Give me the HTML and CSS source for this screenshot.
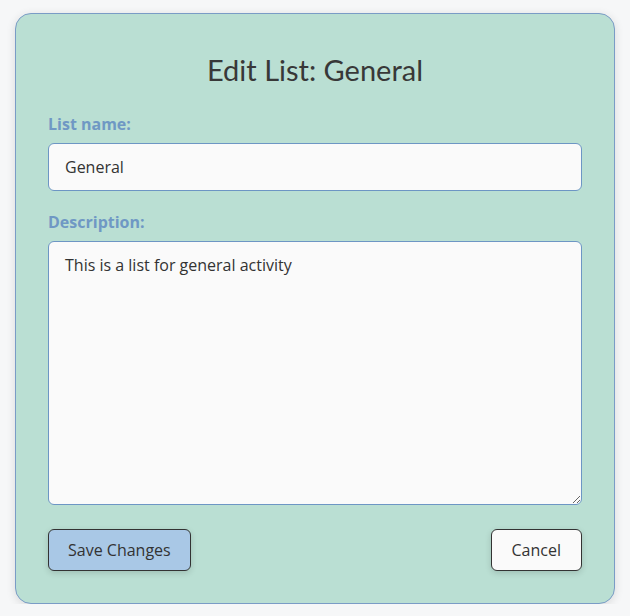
FILE: index.html
```html
<!DOCTYPE html>
<html lang="en">
<head>
<meta charset="utf-8">
<link rel="stylesheet" href="styles.css">
<title>Edit List</title>
</head>
<body>
<main class="page">
  <form class="card">
    <h1 class="title">Edit List: General</h1>
    <label class="label" for="name">List name:</label>
    <input class="field" id="name" type="text" value="General">
    <label class="label" for="desc">Description:</label>
    <textarea class="field area" id="desc">This is a list for general activity</textarea>
    <div class="actions">
      <button type="button" class="btn btn-primary">Save Changes</button>
      <button type="button" class="btn btn-secondary">Cancel</button>
    </div>
  </form>
</main>
</body>
</html>
```
FILE: styles.css
```css
* { box-sizing: border-box; }
html, body { margin: 0; padding: 0; }
body {
  background: #f6f7f8;
  font-family: "Open Sans", sans-serif;
  color: #333;
}
.page {
  display: flex;
  justify-content: center;
  padding-top: 13px;
}
.card {
  width: 600px;
  height: 591px;
  background: #badfd3;
  border: 1px solid #7a9cc6;
  border-radius: 16px;
  box-shadow: 0 2px 10px rgba(0,0,0,0.12);
  padding: 39px 32px 32px;
  display: flex;
  flex-direction: column;
}
.title {
  margin: 0 0 25px;
  font-family: "Lato", sans-serif;
  font-weight: 400;
  font-size: 29px;
  line-height: 1.2;
  text-align: center;
  color: #383838;
}
.label {
  font-weight: 700;
  font-size: 16px;
  color: #6f98c4;
  margin-bottom: 8px;
}
.field {
  display: block;
  width: 100%;
  height: 48px;
  padding: 12px 16px;
  font-family: "Open Sans", sans-serif;
  font-size: 16px;
  color: #333;
  background: #fafafa;
  border: 1px solid #6d96c4;
  border-radius: 6px;
  margin: 0 0 20px;
}
.area {
  height: 264px;
  padding-top: 11px;
  resize: vertical;
  line-height: 1.5;
  margin-bottom: 24px;
}
.actions {
  display: flex;
  justify-content: space-between;
}
.btn {
  height: 42px;
  padding: 0 19px;
  font-family: "Open Sans", sans-serif;
  font-size: 16px;
  color: #333;
  border: 1px solid #333;
  border-radius: 6px;
  box-shadow: 0 2px 6px rgba(0,0,0,0.15);
}
.btn-primary { background: #a9c8e6; }
.btn-secondary { background: #fafafa; padding: 0 20px; }
```
